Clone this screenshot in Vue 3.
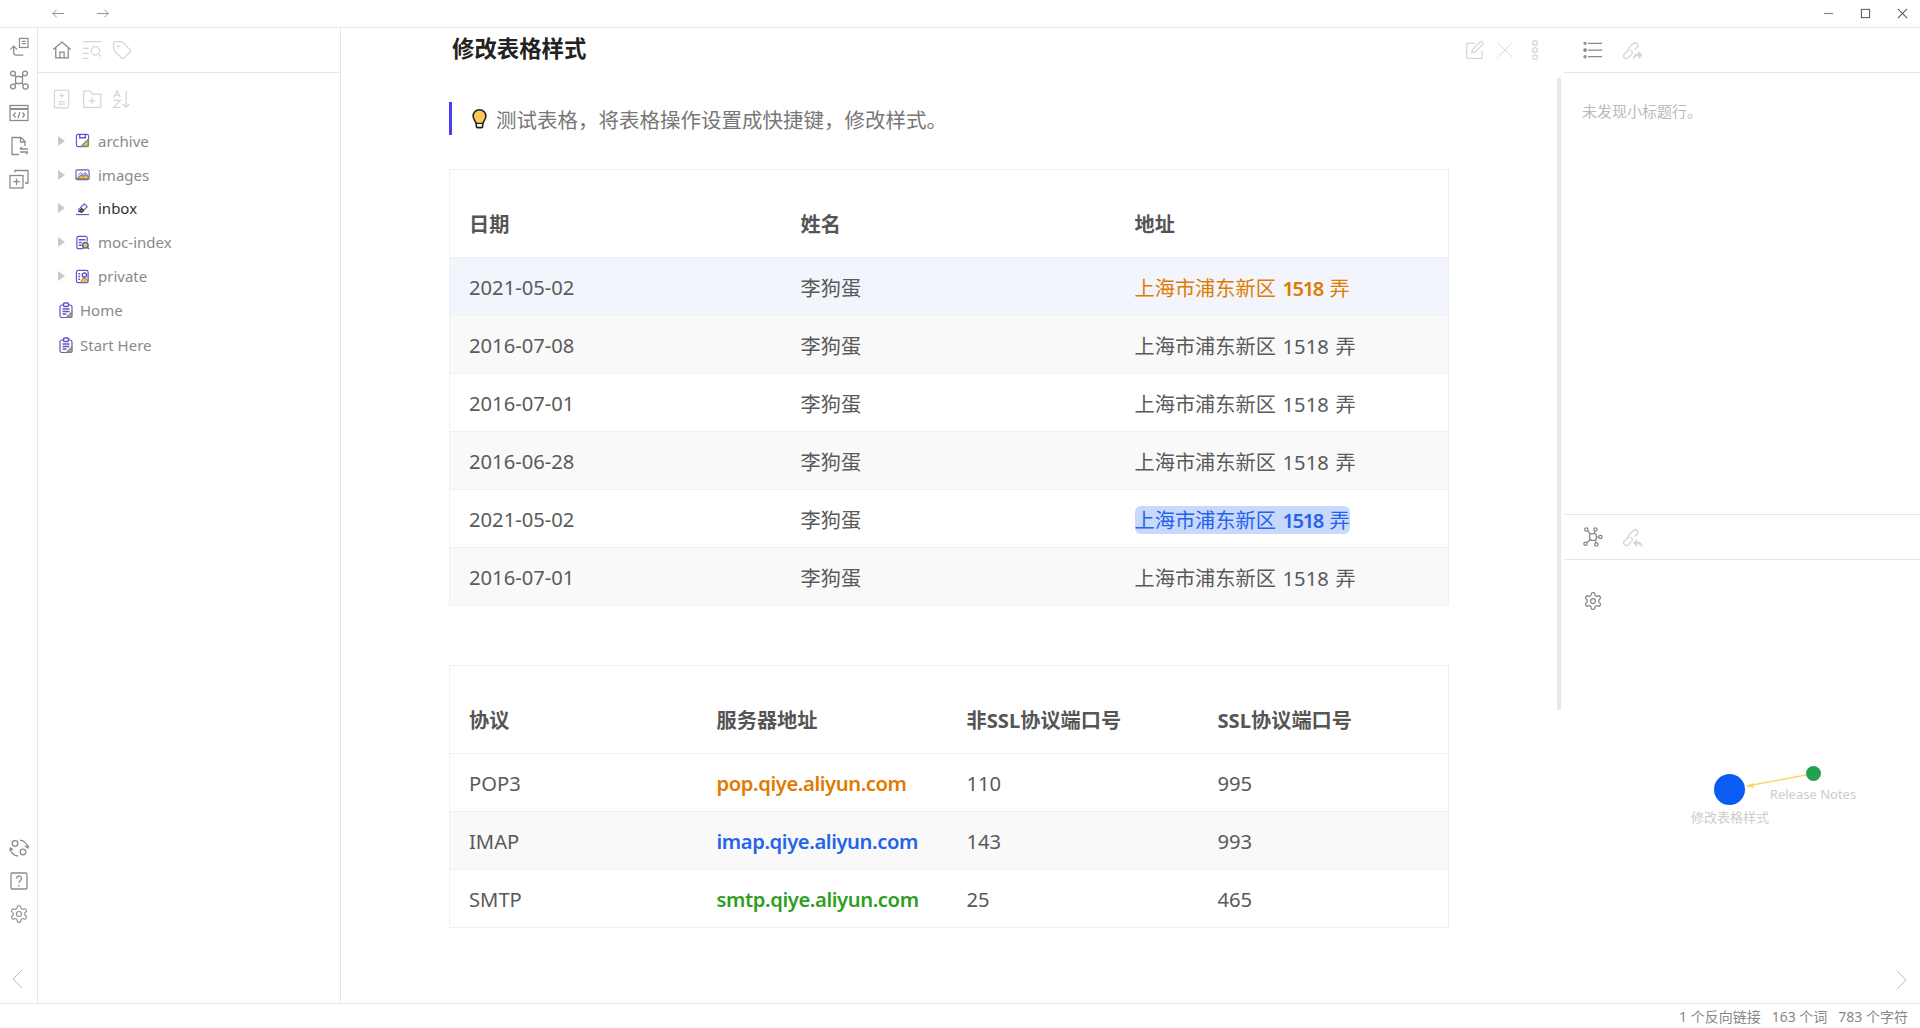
<script setup>
const gear = '<path d="M12.22 2h-.44a2 2 0 0 0-2 2v.18a2 2 0 0 1-1 1.73l-.43.25a2 2 0 0 1-2 0l-.15-.08a2 2 0 0 0-2.73.73l-.22.38a2 2 0 0 0 .73 2.73l.15.1a2 2 0 0 1 1 1.72v.51a2 2 0 0 1-1 1.74l-.15.09a2 2 0 0 0-.73 2.73l.22.38a2 2 0 0 0 2.73.73l.15-.08a2 2 0 0 1 2 0l.43.25a2 2 0 0 1 1 1.73V20a2 2 0 0 0 2 2h.44a2 2 0 0 0 2-2v-.18a2 2 0 0 1 1-1.73l.43-.25a2 2 0 0 1 2 0l.15.08a2 2 0 0 0 2.73-.73l.22-.39a2 2 0 0 0-.73-2.73l-.15-.08a2 2 0 0 1-1-1.74v-.5a2 2 0 0 1 1-1.74l.15-.09a2 2 0 0 0 .73-2.73l-.22-.38a2 2 0 0 0-2.73-.73l-.15.08a2 2 0 0 1-2 0l-.43-.25a2 2 0 0 1-1-1.73V4a2 2 0 0 0-2-2z"/><circle cx="12" cy="12" r="3"/>'
const link = '<path d="M9.500 11 4.500 16a3 3 0 0 0 4.200 4.200l4-4a3 3 0 0 0-1-4.700"/><path d="M10 12.500a3 3 0 0 1 .8-4.500l3.800-3.800a3 3 0 0 1 4.200 4.200L16 11"/>'
const I = {
  left: '<path d="M21 12H3M9 6l-6 6 6 6"/>',
  right: '<path d="M3 12h18M15 6l6 6-6 6"/>',
  min: '<path d="M1 6h10"/>',
  max: '<rect x="1.500" y="1.500" width="9" height="9"/>',
  close: '<path d="M1 1l10 10M11 1 1 11"/>',
  openFile: '<rect x="11" y="1" width="9" height="9.500"/><path d="M13.500 4h4M13.500 6.500h4M15 18.500H7.500A2.500 2.500 0 0 1 5 16V9M1.500 12.500 5 9l3.500 3.500"/>',
  graph: '<circle cx="4" cy="3.500" r="2.400"/><circle cx="16" cy="3.500" r="2.400"/><circle cx="4" cy="16.500" r="2.400"/><circle cx="16.500" cy="16.500" r="2.600"/><rect x="6.500" y="6.500" width="7" height="7" rx="2"/><path d="M5.600 5.300 7.300 7M14.400 5.300 12.700 7M5.600 14.700 7.300 13M14.700 14.800 12.700 13"/>',
  code: '<rect x="1" y="1.500" width="18" height="15"/><path d="M1 5h18" stroke-width="2"/><path d="M6.500 8.500 4.500 11l2 2.500M13.500 8.500l2 2.500-2 2.500M11 8 9 14"/>',
  swap: '<path d="M10 18.500H3V1.500h9l4 4v4.500M11.500 1.500v4.500H16"/><path d="M11 13h8M13 11l-2 2M11 16h8M17 18l2-2"/>',
  dup: '<rect x="1" y="6.500" width="13" height="12.500"/><path d="M7.500 9.500v6.500M4.200 12.700h6.600M6 3.500V1.500h13v12.500h-3"/>',
  sync: '<circle cx="6" cy="5.500" r="2.800"/><circle cx="14" cy="14" r="2.800"/><path d="M11 2.200A8.500 8.500 0 0 1 18.800 10M9 18a8.500 8.500 0 0 1-7.800-8M1 13l.4-3 2.600 1.600M16 8l2.800 2 1-2.500"/>',
  help: '<rect x="2" y="2" width="16" height="16" rx="1"/><path d="M7.500 7.500a2.500 2.500 0 1 1 4 2c-1 .7-1.500 1.200-1.500 2.500M10 14v1.500"/>',
  gear,
  home: '<path d="M1.500 11.500 12 2.500l10.500 9M4.500 9.500V21.500h15V9.500M9.500 21.500v-7h5v7"/>',
  search: '<path d="M1 2h22M1 10h7M1 16h7M1 22h7"/><circle cx="16" cy="13" r="5"/><path d="m20 17 3 3"/>',
  tag: '<path d="M12.586 2.586A2 2 0 0 0 11.172 2H4a2 2 0 0 0-2 2v7.172a2 2 0 0 0 .586 1.414l8.704 8.704a2.426 2.426 0 0 0 3.420 0l6.580-6.580a2.426 2.426 0 0 0 0-3.420z"/><circle cx="7.500" cy="7.500" r=".8"/>',
  newNote: '<rect x="3" y="1.500" width="17" height="21" rx="1"/><path d="M11.500 5v6M8.500 8h6M7.500 15h8M7.500 18h8"/>',
  newFolder: '<path d="M2 22V2.500h8l3 3.500h9.500v16zM12 10.500v7.500M8.500 14.200h7.500"/>',
  sort: '<path d="M2 10 6 2l4 8M3.200 7.500h5.600M2 13.500h8l-8 8.500h8M17 2v20M13 18l4 4 4-4"/>',
  edit: '<path d="M20.500 13v8a1 1 0 0 1-1 1H3a1 1 0 0 1-1-1V5a1 1 0 0 1 1-1h9"/><path d="M18 2.500a2.100 2.100 0 0 1 3 3L12 14.500l-4 1 1-4z"/>',
  x: '<path d="M3 3l18 18M21 3 3 21"/>',
  dots: '<circle cx="12" cy="3.500" r="2.800"/><circle cx="12" cy="12" r="2.800"/><circle cx="12" cy="20.500" r="2.800"/>',
  list: '<circle cx="2.500" cy="3" r="1.300"/><circle cx="2.500" cy="11" r="1.500" fill="currentColor"/><circle cx="2.500" cy="19" r="1.300"/><path d="M6 3h17M6 11h17M6 19h17"/>',
  linkOut: link + '<path d="M14 22c0-4 2-7 6-7v-2.500l4.500 4.500-4.500 4.500V18c-2 0-4 1.500-6 4z" fill="currentColor" stroke="none"/>',
  linkIn: link + '<path d="M24.500 23c0-4-2-7-6-7v-2.500l-4.500 4.500 4.500 4.500V19c2 0 4 1.500 6 4z" fill="currentColor" stroke="none"/>',
  hub: '<rect x="8" y="8" width="8" height="8" rx="2.500"/><circle cx="4" cy="3" r="2"/><circle cx="15" cy="3" r="2"/><circle cx="3" cy="20" r="2"/><circle cx="16" cy="21" r="2"/><circle cx="21" cy="12" r="2"/><path d="m5.500 4.500 3.500 4M14.500 5l-1 3M4.500 18.500 9 15M15.500 19l-.5-3M19 12h-3"/>',
  back: '<path d="M15 3 6 12l9 9"/>',
  fwd: '<path d="M9 3l9 9-9 9"/>',
  bulb: '<path d="M12 1.500C7 1.500 4 5.500 4 9.500c0 4 3 6 3.800 9.500h8.400C17 15.500 20 13.500 20 9.500c0-4-3-8-8-8z" fill="#fcc95e" stroke="#222" stroke-width="2"/><path d="M8 19.500v3a1.500 1.500 0 0 0 1.500 1.500h5a1.500 1.500 0 0 0 1.500-1.500v-3" fill="#fff" stroke="#222" stroke-width="2"/>',
}
const Y = '#f6c61d'
const P = '#5d58c0'
const T = {
  archive: `<rect x="1.500" y="1.500" width="13" height="13" rx="2" fill="none" stroke="${P}" stroke-width="1.200"/><path d="M14 7v7H7z" fill="${Y}"/><path d="M5 1.500v3.500h6V1.500" fill="none" stroke="${P}"/>`,
  images: `<rect x="1" y="3" width="14" height="10.500" rx="1.500" fill="none" stroke="${P}" stroke-width="1.200"/><path d="M2 12.500h12L14 10l-3-2-2 2-2-1.500-4 3z" fill="${Y}"/><path d="m3 9 3-3 2 2 3-2 2 2" fill="none" stroke="${P}" stroke-width=".9"/>`,
  inbox: `<path d="m4 9 6-6 3 3-5.500 5.500H4z" fill="none" stroke="${P}" stroke-width="1.200"/><path d="M5 11l2-3 2 2-2 2z" fill="${Y}"/><path d="M1 14.500h14" stroke="${P}" stroke-width="1.200"/>`,
  moc: `<path d="M13 7V3a1.500 1.500 0 0 0-1.500-1.500h-8A1.500 1.500 0 0 0 2 3v10a1.500 1.500 0 0 0 1.500 1.500H9" fill="none" stroke="${P}" stroke-width="1.300"/><path d="M4 5h7M4 8h3M4 11h3" stroke="${P}"/><circle cx="11" cy="11" r="3" fill="${Y}" stroke="${P}"/><path d="m13 13 2 2" stroke="${P}"/>`,
  priv: `<rect x="1.500" y="1.500" width="12.500" height="13" rx="2" fill="none" stroke="${P}" stroke-width="1.300"/><path d="M3.500 5h2M3.500 8h2M3.500 11h2" stroke="${P}"/><circle cx="10" cy="6.500" r="2.300" fill="#fff" stroke="${P}"/><path d="M6.500 14.500c0-3 1.500-4.500 3.500-4.500s4 1.500 4 4.500z" fill="${Y}" stroke="${P}" stroke-width=".8"/>`,
  file: `<rect x="2" y="3" width="12" height="12.500" rx="2" fill="none" stroke="${P}" stroke-width="1.200"/><rect x="5.500" y="1" width="5" height="3.500" rx="1" fill="#fff" stroke="${P}"/><path d="M4.500 7h7M4.500 9.500h7M4.500 12h4" stroke="${P}"/><path d="M13.500 10.500v4.500H9z" fill="${Y}"/>`,
}
const folders = [
  { name: 'archive', icon: T.archive },
  { name: 'images', icon: T.images },
  { name: 'inbox', icon: T.inbox, active: true },
  { name: 'moc-index', icon: T.moc },
  { name: 'private', icon: T.priv },
]
const files = ['Home', 'Start Here']
const addr = '上海市浦东新区'
const rows1 = [
  { d: '2021-05-02', kind: 'orange', row: 'hover' },
  { d: '2016-07-08', row: 'alt' },
  { d: '2016-07-01' },
  { d: '2016-06-28', row: 'alt' },
  { d: '2021-05-02', kind: 'blue' },
  { d: '2016-07-01', row: 'alt' },
]
const rows2 = [
  { p: 'POP3', s: 'pop.qiye.aliyun.com', c: 'orange', a: '110', b: '995' },
  { p: 'IMAP', s: 'imap.qiye.aliyun.com', c: 'blue-t', a: '143', b: '993', row: 'alt' },
  { p: 'SMTP', s: 'smtp.qiye.aliyun.com', c: 'green', a: '25', b: '465' },
]
</script>

<template>
  <div class="app">
    <header class="titlebar">
      <div class="nav">
        <svg class="i nav-i" viewBox="0 0 24 24" v-html="I.left"></svg>
        <svg class="i nav-i" viewBox="0 0 24 24" v-html="I.right"></svg>
      </div>
      <div class="win">
        <svg class="win-i c-min" viewBox="0 0 12 12" v-html="I.min"></svg>
        <svg class="win-i" viewBox="0 0 12 12" v-html="I.max"></svg>
        <svg class="win-i" viewBox="0 0 12 12" v-html="I.close"></svg>
      </div>
    </header>

    <div class="body">
      <nav class="ribbon">
        <div class="rib-top">
          <svg class="rib-i" viewBox="0 0 21 20" v-html="I.openFile"></svg>
          <svg class="rib-i" viewBox="0 0 20 20" v-html="I.graph"></svg>
          <svg class="rib-i" viewBox="0 0 20 18" v-html="I.code"></svg>
          <svg class="rib-i" viewBox="0 0 20 20" v-html="I.swap"></svg>
          <svg class="rib-i" viewBox="0 0 20 20" v-html="I.dup"></svg>
        </div>
        <div class="rib-bot">
          <svg class="rib-i" viewBox="0 0 20 20" v-html="I.sync"></svg>
          <svg class="rib-i" viewBox="0 0 20 20" v-html="I.help"></svg>
          <svg class="rib-i" viewBox="0 0 24 24" v-html="I.gear"></svg>
          <svg class="chev" viewBox="0 0 24 24" v-html="I.back"></svg>
        </div>
      </nav>

      <aside class="side">
        <div class="pane-head side-head">
          <svg class="hd-i dark" viewBox="0 0 24 24" v-html="I.home"></svg>
          <svg class="hd-i faint" viewBox="0 0 24 24" v-html="I.search"></svg>
          <svg class="hd-i faint" viewBox="0 0 24 24" v-html="I.tag"></svg>
        </div>
        <div class="side-tools">
          <svg class="hd-i faint" viewBox="0 0 24 24" v-html="I.newNote"></svg>
          <svg class="hd-i faint" viewBox="0 0 24 24" v-html="I.newFolder"></svg>
          <svg class="hd-i faint" viewBox="0 0 24 24" v-html="I.sort"></svg>
        </div>
        <ul class="tree">
          <li v-for="f in folders" :key="f.name" class="folder" :class="{ active: f.active }">
            <span class="tri"></span>
            <svg class="t-i" viewBox="0 0 16 16" v-html="f.icon"></svg>
            <span class="t-name">{{ f.name }}</span>
          </li>
          <li v-for="f in files" :key="f" class="file">
            <svg class="t-i" viewBox="0 0 16 16" v-html="T.file"></svg>
            <span>{{ f }}</span>
          </li>
        </ul>
      </aside>

      <main class="main">
        <div class="doc-head">
          <h1>修改表格样式</h1>
          <div class="doc-actions">
            <svg class="hd-i faint" viewBox="0 0 24 24" v-html="I.edit"></svg>
            <svg class="hd-i faint thin" viewBox="0 0 24 24" v-html="I.x"></svg>
            <svg class="hd-i faint" viewBox="0 0 24 24" v-html="I.dots"></svg>
          </div>
        </div>
        <div class="doc">
          <blockquote class="callout">
            <svg class="bulb" viewBox="0 0 24 25" v-html="I.bulb"></svg>
            <span>测试表格，将表格操作设置成快捷键，修改样式。</span>
          </blockquote>

          <table class="tbl t1">
            <thead>
              <tr><th>日期</th><th>姓名</th><th>地址</th></tr>
            </thead>
            <tbody>
              <tr v-for="(r, i) in rows1" :key="i" :class="r.row">
                <td>{{ r.d }}</td>
                <td>李狗蛋</td>
                <td>
                  <span class="addr" :class="r.kind">{{ addr }} <b v-if="r.kind">1518</b><template v-else>1518</template> 弄</span>
                </td>
              </tr>
            </tbody>
          </table>

          <table class="tbl t2">
            <thead>
              <tr><th>协议</th><th>服务器地址</th><th>非SSL协议端口号</th><th>SSL协议端口号</th></tr>
            </thead>
            <tbody>
              <tr v-for="r in rows2" :key="r.p" :class="r.row">
                <td>{{ r.p }}</td>
                <td><b class="host" :class="r.c">{{ r.s }}</b></td>
                <td>{{ r.a }}</td>
                <td>{{ r.b }}</td>
              </tr>
            </tbody>
          </table>
        </div>
        <div class="scrollbar"></div>
      </main>

      <aside class="right">
        <section class="r-top">
          <div class="pane-head r-head">
            <svg class="hd-i dark" viewBox="0 0 24 22" v-html="I.list"></svg>
            <svg class="hd-i faint wide" viewBox="0 0 25 24" v-html="I.linkOut"></svg>
          </div>
          <p class="empty">未发现小标题行。</p>
        </section>
        <section class="r-bot">
          <div class="pane-head r-head">
            <svg class="hd-i dark" viewBox="0 0 24 24" v-html="I.hub"></svg>
            <svg class="hd-i faint wide" viewBox="0 0 25 24" v-html="I.linkIn"></svg>
          </div>
          <svg class="hd-i dark r-gear" viewBox="0 0 24 24" v-html="I.gear"></svg>
          <div class="graph">
            <svg class="edges" viewBox="0 0 356 468">
              <line x1="242" y1="260" x2="183" y2="271" stroke="#fbd565" stroke-width="1.300" />
              <path d="M182 271.500l7-3.800.8 5z" fill="#fbd565" />
            </svg>
            <span class="node big"></span>
            <span class="node small"></span>
            <span class="lbl l-small">Release Notes</span>
            <span class="lbl l-big">修改表格样式</span>
          </div>
          <svg class="chev chev-r" viewBox="0 0 24 24" v-html="I.fwd"></svg>
        </section>
      </aside>
    </div>

    <footer class="status">
      <span>1 个反向链接</span><span>163 个词</span><span>783 个字符</span>
    </footer>
  </div>
</template>

<style>
html, body { margin: 0; background: #fff; overflow: hidden; }
</style>

<style scoped>
.app {
  height: 1028px;
  display: flex;
  flex-direction: column;
  font-family: "Noto Sans", "Noto Sans CJK SC", sans-serif;
  color: #555;
  background: #fff;
  overflow: hidden;
}
svg { display: block; fill: none; stroke: currentColor; stroke-width: 1.500; flex: none; }

.titlebar {
  height: 27px;
  flex: none;
  display: flex;
  align-items: center;
  justify-content: space-between;
  border-bottom: 1px solid #e6e6e6;
}
.nav { display: flex; gap: 29px; padding-left: 51px; color: #888; }
.nav-i { width: 15px; height: 15px; stroke-width: 1.400; }
.win { display: flex; gap: 26px; padding-right: 12px; color: #555; align-items: center; }
.win-i { width: 11px; height: 11px; stroke-width: 1.100; }
.c-min { color: #888; stroke-width: 1.300; }

.body { flex: 1; display: flex; min-height: 0; }

.ribbon {
  width: 37px;
  flex: none;
  border-right: 1px solid #e6e6e6;
  display: flex;
  flex-direction: column;
  justify-content: space-between;
  align-items: center;
  color: #8c8c8c;
}
.rib-top { display: flex; flex-direction: column; align-items: center; gap: 13px; padding-top: 9px; }
.rib-bot { display: flex; flex-direction: column; align-items: center; gap: 13px; padding-bottom: 12px; }
.rib-i { width: 20px; height: 20px; stroke-width: 1.300; }
.chev { width: 24px; height: 24px; stroke-width: 1; color: #bbb; }
.rib-bot .chev { margin-top: 30px; }

.side { width: 302px; flex: none; border-right: 1px solid #e6e6e6; }
.pane-head {
  height: 44px;
  border-bottom: 1px solid #e6e6e6;
  display: flex;
  align-items: center;
}
.side-head { gap: 10px; padding-left: 14px; }
.hd-i { width: 20px; height: 20px; stroke-width: 1.500; }
.wide { width: 23px; height: 23px; }
.dark { color: #888; }
.faint { color: #d6d6d6; }
.thin { stroke-width: 1.100; }
.side-tools { display: flex; gap: 10px; padding: 16px 0 0 14px; }
.tree {
  list-style: none;
  margin: 15px 0 0;
  padding: 0;
  font-size: 15px;
  color: #8a8a8a;
}
.folder, .file { display: flex; align-items: center; }
.folder { height: 33.800px; padding-left: 20px; }
.file { height: 35px; padding-left: 20px; gap: 6px; }
.active { color: #333; }
.tri {
  width: 0;
  height: 0;
  border-left: 7px solid #c9c9c9;
  border-top: 5px solid transparent;
  border-bottom: 5px solid transparent;
  margin-right: 10px;
}
.t-name { margin-left: 8px; }
.t-i { width: 15px; height: 15px; }
.file .t-i { width: 16px; height: 16px; }

.main { flex: 1; min-width: 0; position: relative; }
.doc-head {
  height: 44px;
  box-sizing: border-box;
  display: flex;
  align-items: center;
  justify-content: space-between;
  padding: 0 19px 0 111px;
}
h1 { margin: 0 0 2px; font-size: 22.400px; font-weight: 700; color: #222; line-height: 1; }
.doc-actions { display: flex; gap: 10px; align-items: center; }
.doc { padding: 30px 0 0 108px; width: 1000px; box-sizing: content-box; }
.callout {
  margin: 0;
  height: 33px;
  box-sizing: border-box;
  border-left: 3px solid #4a3ff0;
  display: flex;
  align-items: center;
  padding-left: 18px;
  gap: 7px;
  font-size: 20.500px;
  color: #777;
}
.bulb { width: 19px; height: 25px; }

.tbl {
  width: 1000px;
  table-layout: fixed;
  border-collapse: collapse;
  border: 1px solid #eef0f4;
  font-size: 20.200px;
  color: #5a5a5a;
}
.t1 { margin-top: 34px; }
.t2 { margin-top: 59px; }
th {
  height: 88px;
  box-sizing: border-box;
  padding: 19px 0 0 19px;
  text-align: left;
  font-weight: 700;
  color: #555;
}
td { height: 58px; box-sizing: border-box; padding: 1px 0 0 19px; border-top: 1px solid #eef0f4; white-space: nowrap; }
tr { background: #fff; }
.hover { background: #f2f5fc; }
.alt { background: #f9f9f9; }
.t1 th:nth-child(1) { width: 332px; }
.t1 th:nth-child(2) { width: 334px; }
.t2 th:nth-child(1) { width: 248px; }
.t2 th:nth-child(2) { width: 250px; }
.t2 th:nth-child(3) { width: 251px; }
b { font-weight: 600; }
.addr { word-spacing: 1.500px; }
.addr b { letter-spacing: -1.500px; }
.host { letter-spacing: -.4px; }
.orange { color: #e07b00; }
.blue { color: #2563eb; background: #c9d9fb; border-radius: 6px; }
.blue-t { color: #2563eb; }
.green { color: #2f9e1f; }

.scrollbar { position: absolute; top: 50px; left: 1216px; width: 4px; height: 632px; background: #e8e8e8; }

.right { width: 356px; flex: none; display: flex; flex-direction: column; }
.r-top { height: 487px; border-bottom: 1px solid #e6e6e6; box-sizing: border-box; }
.r-head { gap: 17px; padding-left: 19px; }
.empty { margin: 0; padding: 27px 0 0 18px; font-size: 15px; color: #bbb; line-height: 22px; }
.r-bot { flex: 1; position: relative; }
.r-gear { margin: 31px 0 0 19px; }
.graph { position: absolute; inset: 0; pointer-events: none; }
.edges { position: absolute; left: 0; top: 0; width: 356px; height: 468px; stroke: none; }
.node { position: absolute; border-radius: 50%; }
.big { left: 150px; top: 259px; width: 31px; height: 31px; background: #0b5cf2; }
.small { left: 242px; top: 251px; width: 15px; height: 15px; background: #23a14f; }
.lbl { position: absolute; font-size: 13px; color: #ccc; transform: translateX(-50%); white-space: nowrap; line-height: 18px; }
.l-small { left: 249px; top: 270px; }
.l-big { left: 166px; top: 293px; }
.chev-r { position: absolute; right: 8px; bottom: 11px; }

.status {
  height: 24px;
  flex: none;
  border-top: 1px solid #e6e6e6;
  display: flex;
  justify-content: flex-end;
  align-items: center;
  gap: 11px;
  padding-right: 12px;
  font-size: 14px;
  color: #888;
}
</style>
